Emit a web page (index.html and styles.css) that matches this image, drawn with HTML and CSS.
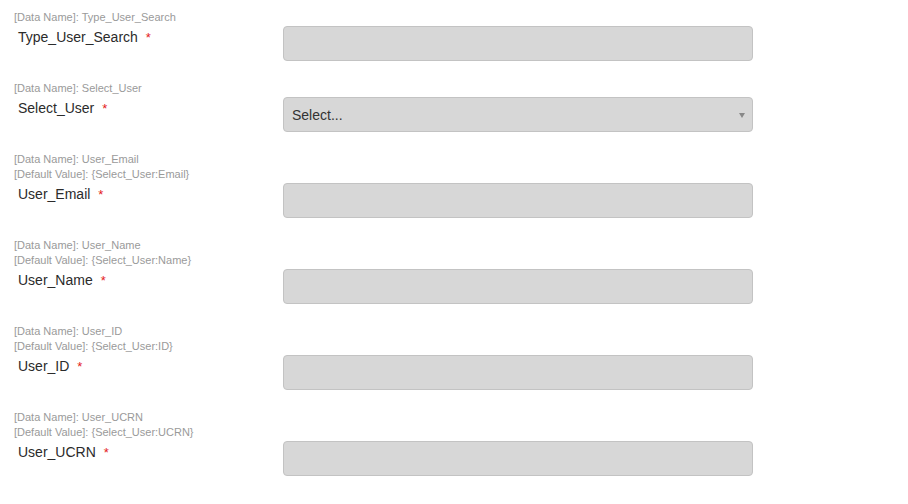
FILE: index.html
```html
<!DOCTYPE html>
<html>
<head>
<meta charset="utf-8">
<link rel="stylesheet" href="styles.css">
</head>
<body>
<form class="form">
  <div class="field">
    <div class="meta">[Data Name]: Type_User_Search</div>
    <div class="row">
      <label class="label">Type_User_Search<span class="req">*</span></label>
      <div class="input"></div>
    </div>
  </div>
  <div class="field">
    <div class="meta">[Data Name]: Select_User</div>
    <div class="row">
      <label class="label">Select_User<span class="req">*</span></label>
      <div class="input select"><span class="placeholder">Select...</span><span class="arrow"></span></div>
    </div>
  </div>
  <div class="field">
    <div class="meta">[Data Name]: User_Email</div>
    <div class="meta">[Default Value]: {Select_User:Email}</div>
    <div class="row">
      <label class="label">User_Email<span class="req">*</span></label>
      <div class="input"></div>
    </div>
  </div>
  <div class="field">
    <div class="meta">[Data Name]: User_Name</div>
    <div class="meta">[Default Value]: {Select_User:Name}</div>
    <div class="row">
      <label class="label">User_Name<span class="req">*</span></label>
      <div class="input"></div>
    </div>
  </div>
  <div class="field">
    <div class="meta">[Data Name]: User_ID</div>
    <div class="meta">[Default Value]: {Select_User:ID}</div>
    <div class="row">
      <label class="label">User_ID<span class="req">*</span></label>
      <div class="input"></div>
    </div>
  </div>
  <div class="field">
    <div class="meta">[Data Name]: User_UCRN</div>
    <div class="meta">[Default Value]: {Select_User:UCRN}</div>
    <div class="row">
      <label class="label">User_UCRN<span class="req">*</span></label>
      <div class="input"></div>
    </div>
  </div>
</form>
</body>
</html>
```
FILE: styles.css
```css
html, body {
  margin: 0;
  padding: 0;
  background: #ffffff;
}
body {
  font-family: "Liberation Sans", Arial, Helvetica, sans-serif;
  color: #333333;
}
.form {
  padding: 10px 0 0 14px;
}
.field {
  margin-bottom: 20px;
}
.meta {
  font-size: 11px;
  line-height: 15px;
  color: #9a9a9a;
}
.row {
  display: flex;
  align-items: flex-start;
  margin-top: 1px;
}
.label {
  width: 265px;
  padding-left: 4px;
  padding-top: 1px;
  font-size: 14px;
  line-height: 20px;
  color: #2b2b2b;
}
.req {
  color: #e41b1b;
  margin-left: 8px;
  font-size: 13px;
}
.input {
  box-sizing: border-box;
  width: 470px;
  height: 35px;
  background: #d7d7d7;
  border: 1px solid #c3c3c3;
  border-radius: 4px;
}
.select {
  display: flex;
  align-items: center;
  justify-content: space-between;
  padding: 0 7px 0 8px;
}
.placeholder {
  font-size: 14px;
  color: #333333;
}
.arrow {
  width: 0;
  height: 0;
  border-left: 3px solid transparent;
  border-right: 3px solid transparent;
  border-top: 5px solid #888888;
  margin-top: 2px;
}
```
